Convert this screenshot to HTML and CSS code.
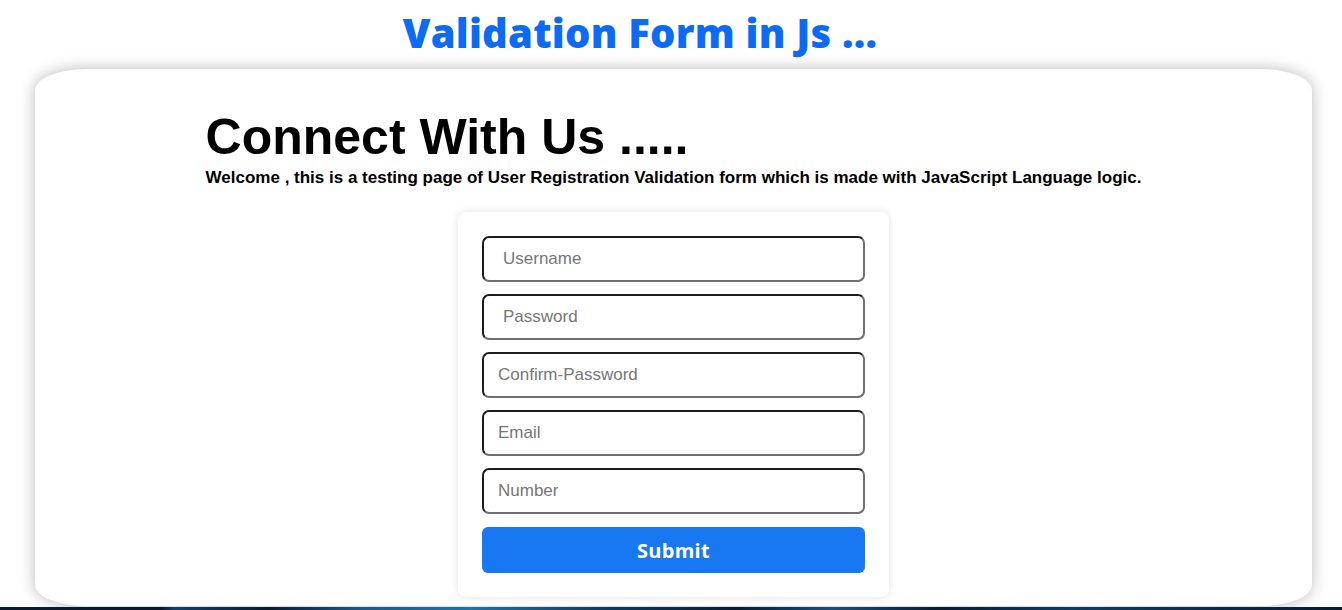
FILE: index.html
```html
<!DOCTYPE html>
<html lang="en">
<head>
<meta charset="utf-8">
<title>Validation Form in Js</title>
<link rel="stylesheet" href="styles.css">
</head>
<body>
<div class="page">
  <header class="top">
    <h2 class="brand">Validation Form in Js ...</h2>
  </header>
  <main class="card">
    <div class="intro">
      <h1 class="heading">Connect With Us .....</h1>
      <p class="lead">Welcome , this is a testing page of User Registration Validation form which is made with JavaScript Language logic.</p>
    </div>
    <form class="form-box">
      <input class="field field-wide" type="text" placeholder="Username">
      <input class="field field-wide" type="password" placeholder="Password">
      <input class="field" type="password" placeholder="Confirm-Password">
      <input class="field" type="email" placeholder="Email">
      <input class="field" type="text" placeholder="Number">
      <button class="submit" type="button">Submit</button>
    </form>
  </main>
</div>
<div class="ground"></div>
</body>
</html>
```
FILE: styles.css
```css
* { box-sizing: border-box; }
html, body { margin: 0; padding: 0; }
body {
  background: #ffffff;
  font-family: "Liberation Sans", Arial, sans-serif;
  overflow: hidden;
  height: 610px;
}
.page {
  height: 607px;
  background: #ffffff;
}
.top {
  height: 69px;
  width: 1280px;
  padding-top: 13px;
  text-align: center;
}
.brand {
  margin: 0;
  font-family: "Open Sans", "DejaVu Sans", sans-serif;
  font-weight: 800;
  font-size: 40px;
  line-height: 40px;
  letter-spacing: 0.2px;
  color: #0d6af5;
}
.card {
  margin-left: 35px;
  width: 1277px;
  height: 537px;
  background: #ffffff;
  border-radius: 4%;
  box-shadow: 0 0 16px rgba(0, 0, 0, 0.28);
  padding-top: 40px;
  display: flex;
  flex-direction: column;
  align-items: center;
}
.intro {
  width: fit-content;
}
.heading {
  margin: 0;
  font-size: 50px;
  font-weight: 700;
  line-height: 57px;
  color: #000;
}
.lead {
  margin: 2px 0 0;
  font-size: 17px;
  font-weight: 700;
  line-height: 19px;
  color: #000;
}
.form-box {
  margin-top: 25px;
  width: 431px;
  padding: 24px;
  background: #ffffff;
  border-radius: 8px;
  box-shadow: 0 0 10px rgba(0, 0, 0, 0.12);
  display: flex;
  flex-direction: column;
  gap: 12px;
}
.field {
  width: 383px;
  height: 46px;
  margin: 0;
  border: 2px solid;
  border-color: #1c1c1c #6f6f6f #6f6f6f #1c1c1c;
  border-radius: 7px;
  padding: 0 14px;
  font-family: "Liberation Sans", Arial, sans-serif;
  font-size: 17px;
  color: #222;
  background: #fff;
  outline: none;
}
.field-wide { padding-left: 19px; }
.field::placeholder { color: #767676; }
.submit {
  margin-top: 1px;
  width: 383px;
  height: 46px;
  border: none;
  border-radius: 6px;
  background: #1877f2;
  color: #ffffff;
  font-family: "Open Sans", "DejaVu Sans", sans-serif;
  font-weight: 700;
  font-size: 20px;
  letter-spacing: 0.3px;
  cursor: pointer;
}
.ground {
  height: 3px;
  background: linear-gradient(90deg, #0b1a2c 0%, #0b1a2c 12%, #1a3f66 13%, #0c1b2e 20%, #1d5a8a 27%, #2173a8 35%, #123a5c 45%, #0c1d30 55%, #1b4f7a 62%, #0c1b2e 70%, #143c60 80%, #0b1a2c 100%);
}
```
